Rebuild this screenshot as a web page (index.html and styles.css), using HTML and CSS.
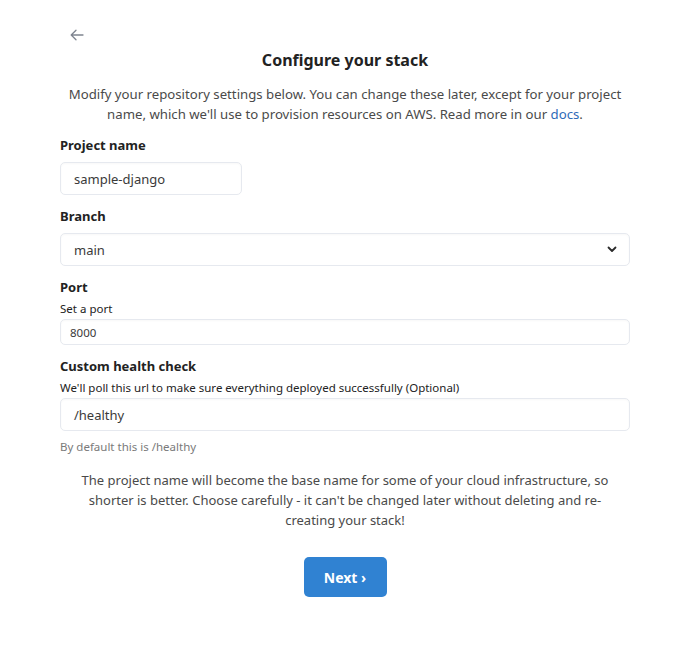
FILE: index.html
```html
<!DOCTYPE html>
<html>
<head>
<meta charset="utf-8">
<link rel="stylesheet" href="styles.css">
</head>
<body>
<div class="page">
  <div class="back">
    <svg width="14" height="12" viewBox="0 0 14 12"><path d="M13 6H1.5M6 1.2L1.2 6 6 10.8" fill="none" stroke="#7f8590" stroke-width="1.3" stroke-linecap="round" stroke-linejoin="round"/></svg>
  </div>
  <h1 class="title">Configure your stack</h1>
  <p class="intro">Modify your repository settings below. You can change these later, except for your project name, which we'll use to provision resources on AWS. Read more in our <a href="#" class="link">docs</a>.</p>

  <div class="field">
    <label class="label">Project name</label>
    <div class="input short">sample-django</div>
  </div>

  <div class="field">
    <label class="label">Branch</label>
    <div class="input select">
      <span>main</span>
      <svg width="10" height="7" viewBox="0 0 10 7"><path d="M1.5 1.5L5 5 8.5 1.5" fill="none" stroke="#2b2b2b" stroke-width="1.8" stroke-linecap="round" stroke-linejoin="round"/></svg>
    </div>
  </div>

  <div class="field">
    <label class="label">Port</label>
    <div class="help dark">Set a port</div>
    <div class="input small">8000</div>
  </div>

  <div class="field">
    <label class="label">Custom health check</label>
    <div class="help dark">We'll poll this url to make sure everything deployed successfully (Optional)</div>
    <div class="input">/healthy</div>
    <div class="help muted">By default this is /healthy</div>
  </div>

  <p class="note">The project name will become the base name for some of your cloud infrastructure, so shorter is better. Choose carefully - it can't be changed later without deleting and re-creating your stack!</p>

  <div class="actions">
    <button class="button">Next ›</button>
  </div>
</div>
</body>
</html>
```

FILE: styles.css
```css
html, body {
  margin: 0;
  padding: 0;
  background: #ffffff;
}
body {
  font-family: "Noto Sans", "Open Sans", sans-serif;
  color: #363636;
  font-size: 13px;
}
.page {
  width: 570px;
  margin: 0 0 0 60px;
  padding-top: 26px;
}
.back {
  height: 18px;
  padding-left: 10px;
  display: flex;
  align-items: center;
}
.title {
  margin: 4px 0 0;
  text-align: center;
  font-size: 16px;
  font-weight: 700;
  color: #222;
  line-height: 24px;
}
.intro {
  margin: 12px 0 0;
  text-align: center;
  color: #4a4a4a;
  font-size: 13.2px;
  line-height: 20px;
}
.link {
  color: #2f6bb8;
  text-decoration: none;
}
.field {
  margin-top: 11px;
}
.label {
  display: block;
  font-weight: 700;
  color: #222;
  line-height: 20px;
  margin-bottom: 7px;
}
.input {
  box-sizing: border-box;
  height: 33px;
  border: 1px solid #e6e9ef;
  border-radius: 5px;
  box-shadow: inset 0 1px 2px rgba(10,10,10,0.03);
  padding: 0 13px;
  display: flex;
  align-items: center;
  color: #3a3a3a;
}
.input.short { width: 182px; }
.select { justify-content: space-between; padding-right: 12px; }
.input.small {
  height: 26px;
  font-size: 11.5px;
  padding: 0 9px;
}
.help {
  font-size: 11.5px;
  line-height: 16px;
  margin: -3px 0 2px;
}
.help.dark { color: #222; }
.help.muted { color: #7a7a7a; margin: 8px 0 0; }
.note {
  margin: 15px 0 0;
  padding: 0 14px;
  text-align: center;
  color: #4a4a4a;
  line-height: 20px;
}
.actions {
  display: flex;
  justify-content: center;
  margin-top: 27px;
}
.button {
  width: 83px;
  height: 40px;
  border: none;
  border-radius: 5px;
  background: #3082d2;
  color: #fff;
  font-family: inherit;
  font-size: 14px;
  font-weight: 700;
}
```
